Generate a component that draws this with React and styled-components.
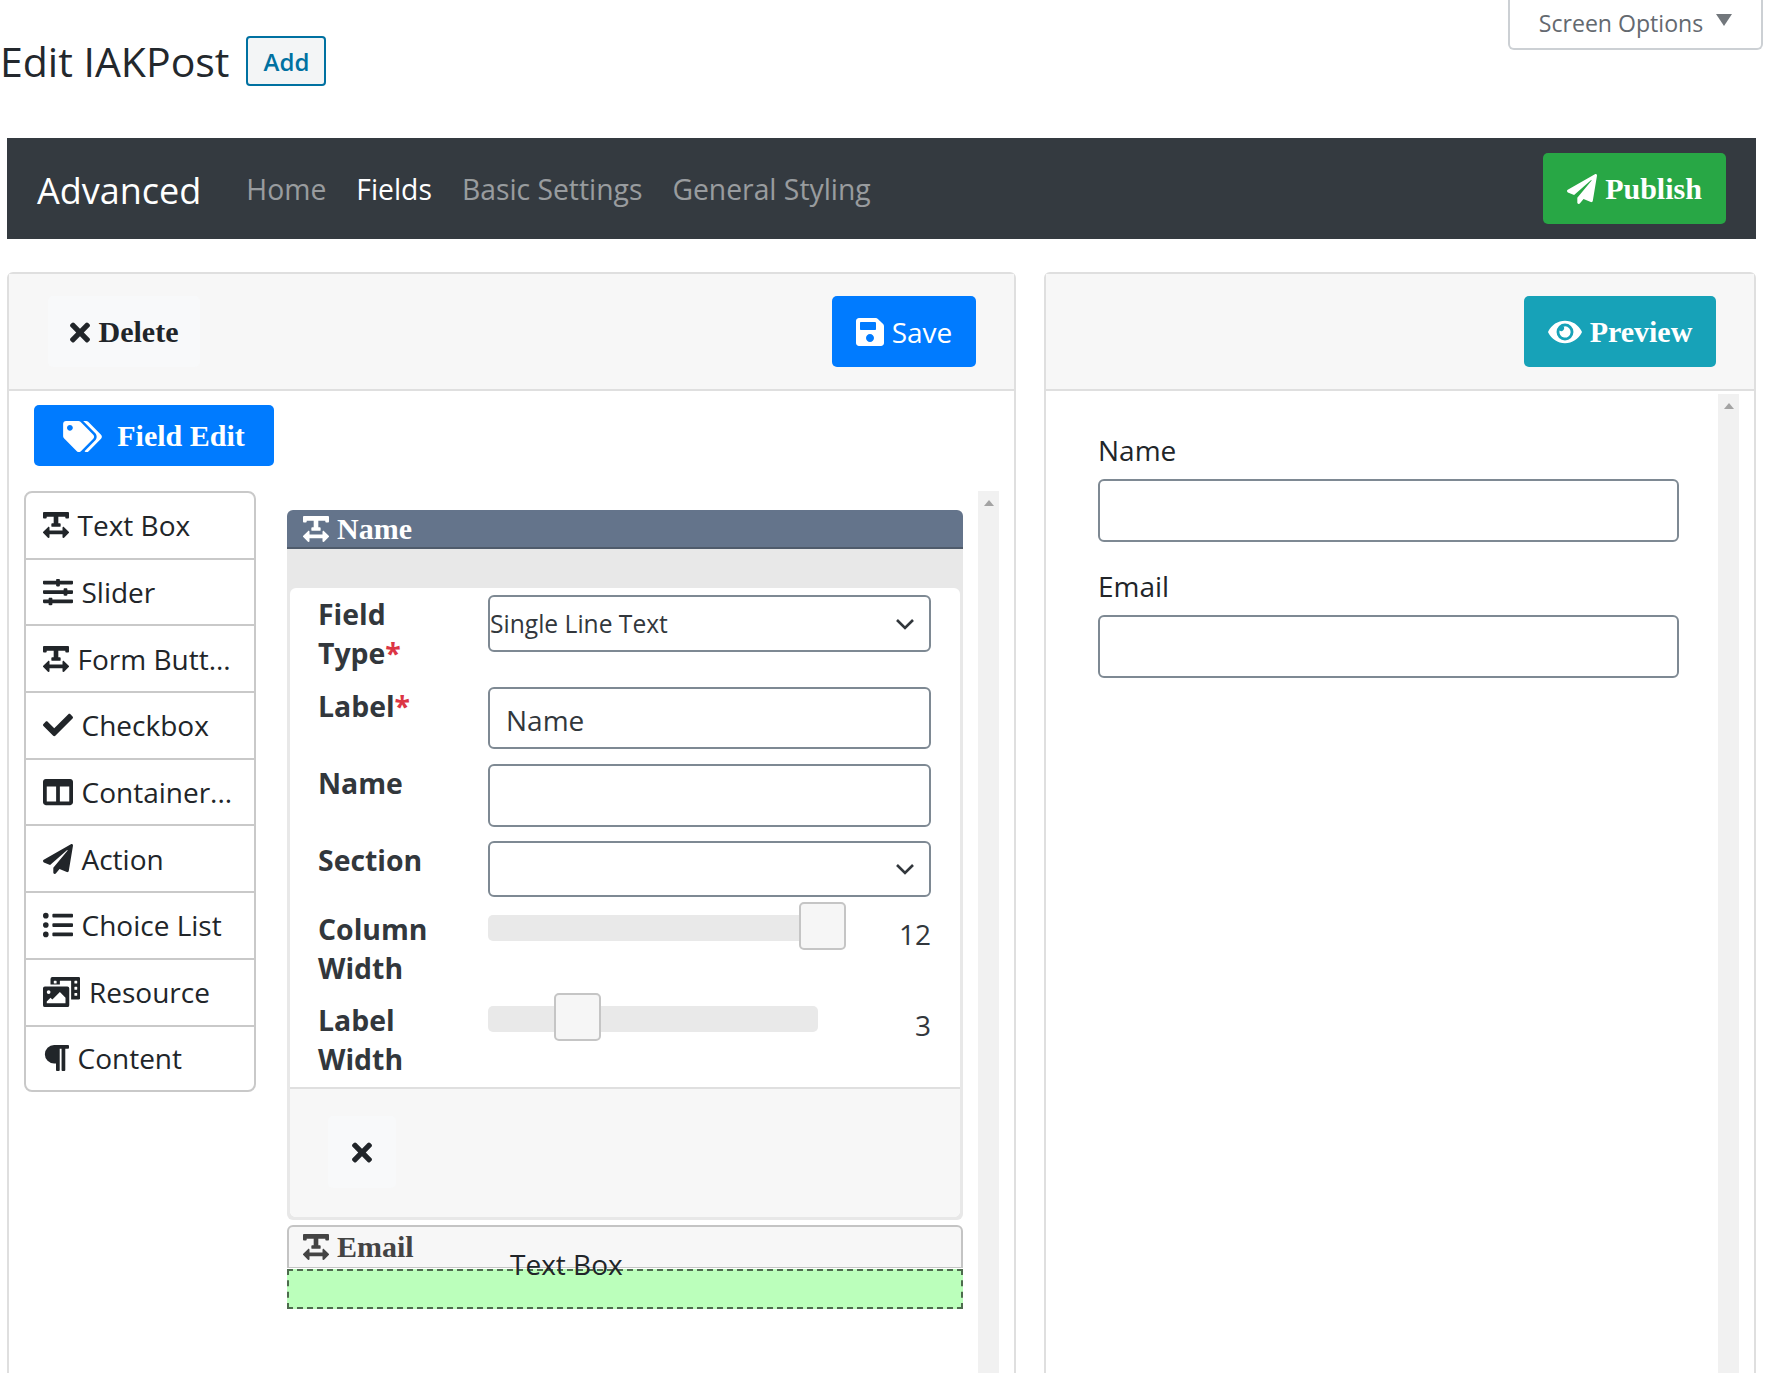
import React from "react";
import styled, { createGlobalStyle } from "styled-components";
import {
  FaCheck,
  FaColumns,
  FaEye,
  FaListUl,
  FaParagraph,
  FaPaperPlane,
  FaPhotoVideo,
  FaSave,
  FaSlidersH,
  FaTags,
  FaTextWidth,
  FaTimes,
} from "react-icons/fa";

const SANS = `"Open Sans", "Noto Sans", sans-serif`;
const SERIF = `"Liberation Serif", serif`;

const GlobalStyle = createGlobalStyle`
  html, body {
    margin: 0;
    background: #fff;
    font-family: ${SANS};
    color: #212529;
  }
  * { box-sizing: border-box; }
`;

const Page = styled.div`
  width: 1789px;
  height: 1373px;
  overflow: hidden;
`;

const TopRow = styled.div`
  height: 138px;
  display: flex;
  align-items: flex-start;
  padding-right: 26px;
`;

const Title = styled.h1`
  margin: 36px 0 0;
  font-size: 41px;
  font-weight: 400;
  line-height: 50px;
  color: #23282d;
`;

const AddButton = styled.a`
  margin: 36px 0 0 17px;
  width: 80px;
  height: 50px;
  display: flex;
  align-items: center;
  justify-content: center;
  border: 2px solid #0071a1;
  border-radius: 4px;
  background: #f3f5f6;
  color: #0071a1;
  font-size: 24px;
  font-weight: 600;
`;

const ScreenOptions = styled.div`
  margin-left: auto;
  width: 255px;
  height: 50px;
  display: flex;
  align-items: center;
  justify-content: center;
  gap: 13px;
  padding-bottom: 3px;
  border: 2px solid #ccd0d4;
  border-top: none;
  border-radius: 0 0 6px 6px;
  color: #646970;
  font-size: 23.1px;
`;

const Arrow = styled.span`
  width: 0;
  height: 0;
  margin-bottom: 6px;
  border-left: 8px solid transparent;
  border-right: 8px solid transparent;
  border-top: 12px solid #72777c;
`;

const NavBar = styled.nav`
  width: 1749px;
  height: 101px;
  margin-left: 7px;
  padding: 0 30px;
  display: flex;
  align-items: center;
  background: #343a40;
`;

const Brand = styled.span`
  margin: 3px 45px 0 0;
  font-size: 36px;
  color: #fff;
`;

const NavLink = styled.a`
  margin-right: 30px;
  font-size: 28.3px;
  color: ${(p) => (p.$active ? "#fff" : "rgba(255, 255, 255, 0.5)")};
`;

const Button = styled.button`
  height: 71px;
  display: flex;
  align-items: center;
  justify-content: center;
  gap: ${(p) => p.$gap || 8}px;
  padding: 1px 0 0;
  border: none;
  border-radius: 5px;
  background: ${(p) => p.$bg};
  color: #fff;
  font-family: ${SERIF};
  font-size: 30px;
  font-weight: 700;
  svg {
    height: ${(p) => p.$icon || 30}px;
    width: ${(p) => p.$iconWidth || 30}px;
  }
`;

const PublishButton = styled(Button)`
  width: 183px;
  margin-left: auto;
`;

const Columns = styled.div`
  margin: 33px 0 0 7px;
  display: flex;
  gap: 28px;
`;

const Card = styled.section`
  width: ${(p) => p.$width}px;
  height: 1120px;
  border: 2px solid #dfdfdf;
  border-radius: 6px 6px 0 0;
`;

const CardHeader = styled.header`
  height: 117px;
  padding: 22px ${(p) => p.$right}px 0 39px;
  display: flex;
  justify-content: ${(p) => (p.$end ? "flex-end" : "space-between")};
  align-items: flex-start;
  background: #f7f7f7;
  border-bottom: 2px solid #dfdfdf;
`;

const DeleteButton = styled(Button)`
  width: 152px;
  background: #f8f9fa;
  color: #212529;
`;

const SaveButton = styled(Button)`
  width: 144px;
  font-family: ${SANS};
  font-size: 28px;
  font-weight: 400;
`;

const PreviewButton = styled(Button)`
  width: 192px;
`;

const CardBody = styled.div`
  padding: 14px 0 0 15px;
`;

const FieldEditButton = styled(Button)`
  width: 240px;
  height: 61px;
  margin-left: 10px;
`;

const Workspace = styled.div`
  margin-top: 25px;
  display: flex;
  align-items: flex-start;
`;

const Palette = styled.ul`
  width: 232px;
  margin: 0 31px 0 0;
  padding: 0;
  list-style: none;
  border: 2px solid #c9c9c9;
  border-radius: 8px;
`;

const PaletteItem = styled.li`
  height: ${(p) => (p.$last ? 63 : 66.7)}px;
  padding-left: 16.5px;
  display: flex;
  align-items: center;
  gap: 9px;
  font-size: 28px;
  color: #212529;
  border-bottom: ${(p) => (p.$last ? "none" : "2px solid #c9c9c9")};
  svg {
    height: 30px;
    width: ${(p) => p.$iconWidth}px;
    flex: none;
  }
`;

const Builder = styled.div`
  width: 676px;
  margin-top: 19px;
`;

const FieldHeader = styled.div`
  height: 39px;
  padding-left: 16px;
  display: flex;
  align-items: center;
  gap: 8px;
  background: #64748b;
  border-bottom: 2px solid #4f5b6b;
  border-radius: 6px 6px 0 0;
  color: #fff;
  font-family: ${SERIF};
  font-size: 30px;
  font-weight: 700;
  svg {
    height: 30px;
    width: 26px;
  }
`;

const FieldPanel = styled.div`
  padding: 39px 3px 3px;
  background: #e8e8e8;
  border-radius: 0 0 6px 6px;
`;

const FieldInner = styled.div`
  border-radius: 6px;
  background: #fff;
  overflow: hidden;
  padding-top: 7px;
`;

const Row = styled.div`
  height: ${(p) => p.$h}px;
  padding-left: 28px;
  display: grid;
  grid-template-columns: 170px 443px;
  align-items: start;
`;

const RowLabel = styled.label`
  padding: ${(p) => p.$top || 0}px 30px 0 0;
  font-size: 28.4px;
  font-weight: 700;
  line-height: 39px;
  color: #32373c;
`;

const Required = styled.span`
  color: #dc3545;
`;

const TextInput = styled.input`
  display: block;
  width: 100%;
  height: ${(p) => p.$h || 63}px;
  padding: 3px 16px 0;
  border: 2px solid #7e8993;
  border-radius: 6px;
  outline: none;
  background: #fff;
  color: #32373c;
  font-family: ${SANS};
  font-size: 28px;
`;

const SelectBox = styled.div`
  height: ${(p) => p.$h}px;
  padding: 0 14px 0 0;
  display: flex;
  align-items: center;
  justify-content: space-between;
  border: 2px solid #7e8993;
  border-radius: 6px;
  color: #32373c;
  font-size: 24.6px;
`;

const Chevron = () => (
  <svg width="20" height="12" viewBox="0 0 20 12" style={{ marginLeft: "auto" }}>
    <path d="M2 2l8 8 8-8" fill="none" stroke="#32373c" strokeWidth="2.6" />
  </svg>
);

const SliderWrap = styled.div`
  display: flex;
  align-items: flex-start;
  justify-content: space-between;
  height: 47px;
`;

const Track = styled.div`
  position: relative;
  width: ${(p) => p.$width}px;
  height: 26px;
  margin-top: ${(p) => p.$top}px;
  background: #e9e9e9;
  border-radius: 5px;
`;

const Handle = styled.span`
  position: absolute;
  top: ${(p) => p.$top}px;
  left: ${(p) => p.$left}px;
  width: 47px;
  height: 48px;
  background: #f6f6f6;
  border: 2px solid #c5c5c5;
  border-radius: 5px;
`;

const SliderValue = styled.span`
  padding-top: 13px;
  font-size: 28px;
  line-height: 38px;
  color: #32373c;
`;

const FieldFooter = styled.div`
  height: 130px;
  padding: 27px 0 0 38px;
  background: #f7f7f7;
  border-top: 2px solid #dfdfdf;
`;

const FooterDelete = styled(Button)`
  width: 68px;
  height: 72px;
  background: #f8f9fa;
  color: #212529;
`;

const EmailHeader = styled.div`
  height: 43px;
  margin-top: 5px;
  padding-left: 14px;
  display: flex;
  align-items: center;
  gap: 8px;
  background: #f7f7f7;
  border: 2px solid #c4c4c4;
  border-bottom-width: 1px;
  border-radius: 6px 6px 0 0;
  color: #444;
  font-family: ${SERIF};
  font-size: 30px;
  font-weight: 700;
  svg {
    height: 30px;
    width: 26px;
  }
`;

const DropZone = styled.div`
  position: relative;
  height: 40px;
  margin-top: 1px;
  background: #bbffbb;
  border: 2px dashed #4d6b4d;
`;

const DragGhost = styled.span`
  position: absolute;
  top: -26px;
  left: 221px;
  font-size: 28px;
  line-height: 38px;
  color: #212529;
`;

const Scrollbar = styled.div`
  width: 21px;
  height: ${(p) => p.$h}px;
  margin-left: ${(p) => p.$left}px;
  flex: none;
  display: flex;
  justify-content: center;
  padding-top: 9px;
  background: #f1f1f1;
`;

const ScrollArrow = styled.span`
  width: 0;
  height: 0;
  border-left: 5px solid transparent;
  border-right: 5px solid transparent;
  border-bottom: 6px solid #a3a3a3;
`;

const PreviewBody = styled.div`
  padding: 3px 0 0 52px;
  display: flex;
  align-items: flex-start;
`;

const PreviewForm = styled.form`
  width: 581px;
  padding-top: 36px;
`;

const PreviewLabel = styled.label`
  display: block;
  height: 49px;
  font-size: 28px;
  line-height: 40px;
  color: #212529;
`;

const PreviewField = styled.div`
  margin-bottom: ${(p) => p.$gap || 0}px;
`;

const palette = [
  { Icon: FaTextWidth, width: 26, label: "Text Box" },
  { Icon: FaSlidersH, width: 30, label: "Slider" },
  { Icon: FaTextWidth, width: 26, label: "Form Butt..." },
  { Icon: FaCheck, width: 30, label: "Checkbox" },
  { Icon: FaColumns, width: 30, label: "Container..." },
  { Icon: FaPaperPlane, width: 30, label: "Action" },
  { Icon: FaListUl, width: 30, label: "Choice List" },
  { Icon: FaPhotoVideo, width: 37.5, label: "Resource" },
  { Icon: FaParagraph, width: 26, label: "Content" },
];

export default function App() {
  return (
    <Page>
      <GlobalStyle />
      <TopRow>
        <Title>Edit IAKPost</Title>
        <AddButton>Add</AddButton>
        <ScreenOptions>
          Screen Options
          <Arrow />
        </ScreenOptions>
      </TopRow>

      <NavBar>
        <Brand>Advanced</Brand>
        <NavLink>Home</NavLink>
        <NavLink $active>Fields</NavLink>
        <NavLink>Basic Settings</NavLink>
        <NavLink>General Styling</NavLink>
        <PublishButton $bg="#28a745">
          <FaPaperPlane />
          Publish
        </PublishButton>
      </NavBar>

      <Columns>
        <Card $width={1009}>
          <CardHeader $right={38}>
            <DeleteButton $icon={29} $iconWidth={20} $gap={9}>
              <FaTimes />
              Delete
            </DeleteButton>
            <SaveButton $bg="#007bff" $icon={32} $iconWidth={28}>
              <FaSave />
              Save
            </SaveButton>
          </CardHeader>
          <CardBody>
            <FieldEditButton $bg="#007bff" $icon={31} $iconWidth={39} $gap={15}>
              <FaTags />
              Field Edit
            </FieldEditButton>
            <Workspace>
              <Palette>
                {palette.map(({ Icon, width, label }, i) => (
                  <PaletteItem key={label} $iconWidth={width} $last={i === palette.length - 1}>
                    <Icon />
                    {label}
                  </PaletteItem>
                ))}
              </Palette>
              <Builder>
                <FieldHeader>
                  <FaTextWidth />
                  Name
                </FieldHeader>
                <FieldPanel>
                  <FieldInner>
                    <Row $h={92}>
                      <RowLabel>
                        Field Type<Required>*</Required>
                      </RowLabel>
                      <SelectBox $h={57}>
                        Single Line Text
                        <Chevron />
                      </SelectBox>
                    </Row>
                    <Row $h={77}>
                      <RowLabel>
                        Label<Required>*</Required>
                      </RowLabel>
                      <TextInput $h={62} defaultValue="Name" />
                    </Row>
                    <Row $h={77}>
                      <RowLabel>Name</RowLabel>
                      <TextInput />
                    </Row>
                    <Row $h={61}>
                      <RowLabel>Section</RowLabel>
                      <SelectBox $h={56}>
                        <Chevron />
                      </SelectBox>
                    </Row>
                    <Row $h={91}>
                      <RowLabel $top={8}>Column Width</RowLabel>
                      <SliderWrap>
                        <Track $width={358} $top={13}>
                          <Handle $left={311} $top={-13} />
                        </Track>
                        <SliderValue>12</SliderValue>
                      </SliderWrap>
                    </Row>
                    <Row $h={94}>
                      <RowLabel $top={8}>Label Width</RowLabel>
                      <SliderWrap>
                        <Track $width={330} $top={13}>
                          <Handle $left={66} $top={-13} />
                        </Track>
                        <SliderValue>3</SliderValue>
                      </SliderWrap>
                    </Row>
                    <FieldFooter>
                      <FooterDelete $icon={29} $iconWidth={20}>
                        <FaTimes />
                      </FooterDelete>
                    </FieldFooter>
                  </FieldInner>
                </FieldPanel>
                <EmailHeader>
                  <FaTextWidth />
                  Email
                </EmailHeader>
                <DropZone>
                  <DragGhost>Text Box</DragGhost>
                </DropZone>
              </Builder>
              <Scrollbar $left={15} $h={900}>
                <ScrollArrow />
              </Scrollbar>
            </Workspace>
          </CardBody>
        </Card>

        <Card $width={712}>
          <CardHeader $right={38} $end>
            <PreviewButton $bg="#17a2b8" $iconWidth={34}>
              <FaEye />
              Preview
            </PreviewButton>
          </CardHeader>
          <PreviewBody>
            <PreviewForm>
              <PreviewField $gap={24}>
                <PreviewLabel>Name</PreviewLabel>
                <TextInput />
              </PreviewField>
              <PreviewField>
                <PreviewLabel>Email</PreviewLabel>
                <TextInput />
              </PreviewField>
            </PreviewForm>
            <Scrollbar $left={39} $h={1000}>
              <ScrollArrow />
            </Scrollbar>
          </PreviewBody>
        </Card>
      </Columns>
    </Page>
  );
}
